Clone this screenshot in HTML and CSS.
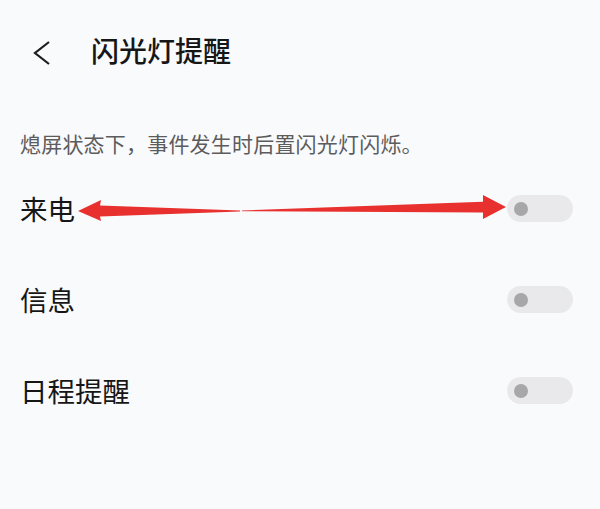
FILE: index.html
```html
<!DOCTYPE html>
<html lang="zh-CN">
<head>
    <meta charset="UTF-8">
    <meta name="viewport" content="width=device-width, initial-scale=1.0">
    <title>闪光灯提醒</title>
    <link rel="stylesheet" href="styles.css">
</head>
<body>
    <div class="page">
        <header class="top-bar">
            <svg class="back" width="18" height="24" viewBox="0 0 18 24">
                <path d="M16 1 L2 12 L16 23" fill="none" stroke="#1c1c1c" stroke-width="2.2" stroke-linejoin="miter"/>
            </svg>
            <h1 class="title">闪光灯提醒</h1>
        </header>

        <p class="desc">熄屏状态下，事件发生时后置闪光灯闪烁。</p>

        <ul class="list">
            <li class="row">
                <span class="label">来电</span>
                <span class="switch"><span class="knob"></span></span>
            </li>
            <li class="row">
                <span class="label">信息</span>
                <span class="switch"><span class="knob"></span></span>
            </li>
            <li class="row">
                <span class="label">日程提醒</span>
                <span class="switch"><span class="knob"></span></span>
            </li>
        </ul>

        <!-- red annotation arrow over the first row -->
        <svg class="mark" width="600" height="509" viewBox="0 0 600 509">
            <polygon fill="#e8302e" points="78,211 101,200 100,205.5 240,210.6 240,211.4 100,216.5 101,221"/>
            <polygon fill="#e8302e" points="242,210.4 483,201.8 483,195 506,207 483,219 483,212.4 242,211.2"/>
        </svg>
    </div>
</body>
</html>
```

FILE: styles.css
```css
/* Pagina */
body {
    margin: 0;
    background: #f9fafc;
    font-family: 'Noto Sans CJK SC', 'Noto Sans', sans-serif;
    color: #161616;
}

.page {
    position: relative;
    width: 600px;
    height: 509px;
    overflow: hidden;
}

/* Barra superiore */
.top-bar {
    display: flex;
    align-items: center;
    height: 100px;
    padding-left: 33px;
    gap: 40px;
}

.back {
    margin-top: 6px;
    flex-shrink: 0;
}

.title {
    margin: 0;
    font-size: 28px;
    font-weight: 500;
    line-height: 1;
}

/* Descrizione */
.desc {
    margin: 28px 0 0;
    padding: 0 20px;
    height: 30px;
    line-height: 30px;
    font-size: 21px;
    letter-spacing: 0.2px;
    color: #5c5c5c;
}

/* Lista */
.list {
    list-style: none;
    margin: 5px 0 0;
    padding: 0;
}

.row {
    display: flex;
    justify-content: space-between;
    align-items: center;
    height: 91px;
    padding: 0 27px 0 20px;
}

.label {
    font-size: 27.5px;
    line-height: 1;
}

.switch {
    display: flex;
    align-items: center;
    width: 66px;
    height: 27px;
    padding-left: 7px;
    box-sizing: border-box;
    border-radius: 14px;
    background: #e9e9ec;
}

.knob {
    width: 14px;
    height: 14px;
    border-radius: 50%;
    background: #a7a7a9;
}

.mark {
    position: absolute;
    left: 0;
    top: 0;
    pointer-events: none;
}
```
